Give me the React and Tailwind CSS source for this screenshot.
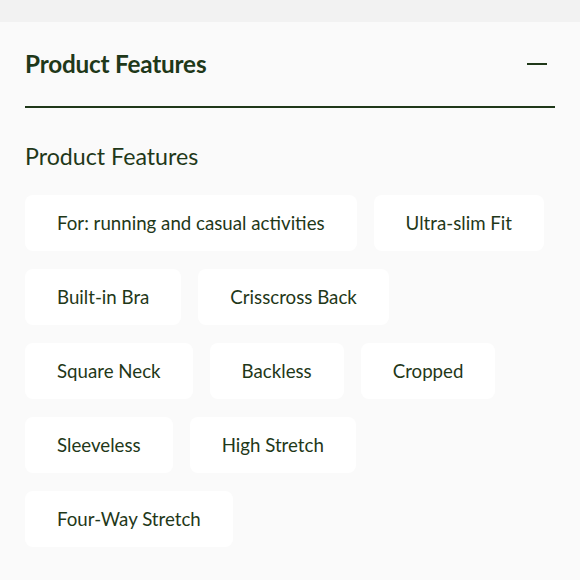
import React from "react";

const features = [
  "For: running and casual activities",
  "Ultra-slim Fit",
  "Built-in Bra",
  "Crisscross Back",
  "Square Neck",
  "Backless",
  "Cropped",
  "Sleeveless",
  "High Stretch",
  "Four-Way Stretch",
];

export default function App() {
  return (
    <div className="w-[580px] h-[580px] overflow-hidden bg-[#f3f3f3] font-['Lato','Noto_Sans',sans-serif] text-[#1f3819]">
      <div className="h-[22px] bg-[#f2f2f2]" />
      <section className="bg-[#fafafa] px-[25px] h-[558px]">
        {/* Accordion header */}
        <button className="w-full flex items-center justify-between h-[86px] pt-[1px] border-b-2 border-[#1f3819]">
          <h2 className="text-[24.3px] font-bold tracking-[-0.2px]">Product Features</h2>
          <span className="w-[20px] h-[2px] bg-[#1f3819] mr-[8px] mb-[2px]" />
        </button>

        {/* Content */}
        <div className="pt-[34px]">
          <h3 className="text-[23.2px] leading-[28px] font-normal">Product Features</h3>
          <ul className="mt-[25px] flex flex-wrap gap-x-[17px] gap-y-[18px]">
            {features.map((f) => (
              <li
                key={f}
                className="h-[56px] px-[32px] flex items-center bg-white rounded-[8px] text-[18.7px]"
              >
                {f}
              </li>
            ))}
          </ul>
        </div>
      </section>
    </div>
  );
}
